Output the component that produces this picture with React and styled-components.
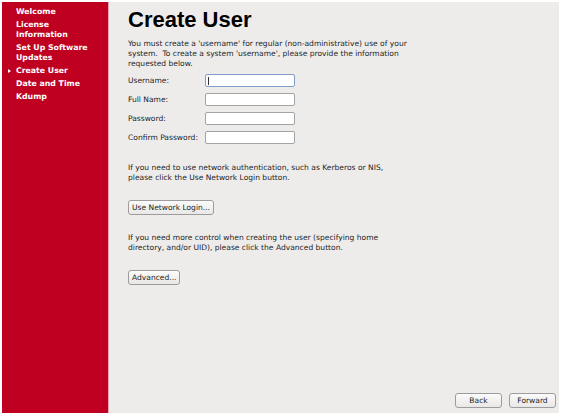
import React from "react";
import styled, { createGlobalStyle } from "styled-components";

const Global = createGlobalStyle`
  html, body { margin: 0; padding: 0; background: #ffffff; }
  body { font-family: "DejaVu Sans", "Liberation Sans", sans-serif; }
  * { box-sizing: border-box; }
`;

const Frame = styled.div`
  margin: 2px 3px 2px 2px;
  height: 411px;
  display: grid;
  grid-template-columns: 107px 1fr;
  background: #edeceb;
`;

const Sidebar = styled.nav`
  background: #bf0020;
  border-right: 1px solid #e6a7b1;
  padding: 5px 0 0 6px;
  display: flex;
  flex-direction: column;
  gap: 3px;
`;

const NavItem = styled.div`
  display: flex;
  align-items: flex-start;
  color: #ffffff;
  font-weight: bold;
  font-size: 7.8px;
  line-height: 10px;
`;

const Marker = styled.span`
  width: 8px;
  flex: none;
  display: flex;
  align-items: center;
  height: 10px;
  &::before {
    content: "";
    display: ${(p) => (p.$active ? "block" : "none")};
    width: 0;
    height: 0;
    border-left: 3px solid #ffffff;
    border-top: 2.5px solid transparent;
    border-bottom: 2.5px solid transparent;
  }
`;

const Main = styled.main`
  display: flex;
  flex-direction: column;
  padding: 5px 3px 5px 19px;
  color: #1c1c1c;
  font-size: 7.55px;
  line-height: 10px;
`;

const Title = styled.h1`
  margin: 0;
  font-family: "Liberation Sans", Arial, sans-serif;
  font-weight: bold;
  font-size: 22px;
  line-height: 26px;
  color: #000;
`;

const Para = styled.p`
  margin: ${(p) => p.$mt || 0}px 0 0 0;
  white-space: nowrap;
`;

const Form = styled.div`
  margin-top: 5px;
  display: grid;
  grid-template-columns: 77px 90px;
  row-gap: 6px;
  align-items: center;
`;

const Label = styled.label`
  line-height: 10px;
`;

const Field = styled.input`
  width: 90px;
  height: 13px;
  border: 1px solid ${(p) => (p.$focused ? "#7f9dc6" : "#a3a3a3")};
  border-radius: 2px;
  background: ${(p) =>
    p.$focused
      ? "linear-gradient(#333, #333) no-repeat 2px 2px / 1px 8px, #ffffff"
      : "#ffffff"};
  padding: 0;
  outline: none;
`;

const Button = styled.button`
  align-self: flex-start;
  margin-top: ${(p) => p.$mt || 0}px;
  min-width: ${(p) => p.$minW || 0}px;
  height: 15px;
  padding: 0 3px;
  font-family: "DejaVu Sans", sans-serif;
  font-size: 7.55px;
  line-height: 13px;
  color: #1c1c1c;
  border: 1px solid #9c9c9c;
  border-radius: 3px;
  background: linear-gradient(#fbfbfb, #e9e8e6);
`;

const Footer = styled.div`
  margin-top: auto;
  display: flex;
  justify-content: flex-end;
  gap: 7px;
`;

const items = [
  { t: ["Welcome"] },
  { t: ["License", "Information"] },
  { t: ["Set Up Software", "Updates"] },
  { t: ["Create User"], active: true },
  { t: ["Date and Time"] },
  { t: ["Kdump"] },
];

const Lines = ({ lines }) =>
  lines.map((l, i) => (
    <React.Fragment key={i}>
      {i > 0 && <br />}
      {l}
    </React.Fragment>
  ));

export default function App() {
  return (
    <>
      <Global />
      <Frame>
        <Sidebar>
          {items.map((it) => (
            <NavItem key={it.t[0]}>
              <Marker $active={it.active} />
              <span>
                <Lines lines={it.t} />
              </span>
            </NavItem>
          ))}
        </Sidebar>
        <Main>
          <Title>Create User</Title>
          <Para $mt={6}>
            <Lines
              lines={[
                "You must create a 'username' for regular (non-administrative) use of your",
                "system.\u00a0 To create a system 'username', please provide the information",
                "requested below.",
              ]}
            />
          </Para>
          <Form>
            <Label>Username:</Label>
            <Field $focused />
            <Label>Full Name:</Label>
            <Field />
            <Label>Password:</Label>
            <Field type="password" />
            <Label>Confirm Password:</Label>
            <Field type="password" />
          </Form>
          <Para $mt={19}>
            <Lines
              lines={[
                "If you need to use network authentication, such as Kerberos or NIS,",
                "please click the Use Network Login button.",
              ]}
            />
          </Para>
          <Button $mt={17}>Use Network Login...</Button>
          <Para $mt={18}>
            <Lines
              lines={[
                "If you need more control when creating the user (specifying home",
                "directory, and/or UID), please click the Advanced button.",
              ]}
            />
          </Para>
          <Button $mt={17}>Advanced...</Button>
          <Footer>
            <Button $minW={47}>Back</Button>
            <Button $minW={47}>Forward</Button>
          </Footer>
        </Main>
      </Frame>
    </>
  );
}
